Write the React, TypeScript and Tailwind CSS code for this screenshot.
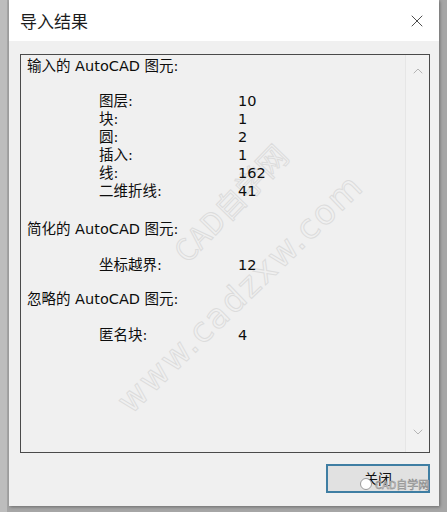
import { X, ChevronUp, ChevronDown } from "lucide-react";

const ui = { fontFamily: '"DejaVu Sans", "Noto Sans CJK SC", sans-serif' };
const cjk = { fontFamily: '"Noto Sans CJK SC", "Noto Sans", sans-serif' };

type Entry = { label: string; value: number };

const imported: Entry[] = [
  { label: "图层:", value: 10 },
  { label: "块:", value: 1 },
  { label: "圆:", value: 2 },
  { label: "插入:", value: 1 },
  { label: "线:", value: 162 },
  { label: "二维折线:", value: 41 },
];

function Row({ label, value }: Entry) {
  return (
    <div className="flex h-[18px] items-center leading-[18px]">
      <span className="w-[139px] pl-[72px] box-content">{label}</span>
      <span>{value}</span>
    </div>
  );
}

function Heading({ children }: { children: string }) {
  return <div className="h-[18px] leading-[18px]">{children}</div>;
}

export default function App() {
  return (
    <div className="relative h-[512px] w-[447px] overflow-hidden bg-[#a6a6a6]">
      <div className="absolute left-0 top-0 h-full w-[7px] bg-[#bdbdbd]" />

      <div className="relative ml-[9px] flex h-[506px] w-[430px] flex-col bg-[#f0f0f0] shadow-[1px_1px_3px_rgba(0,0,0,0.35)]">
        {/* title bar */}
        <div className="flex h-[41px] items-center justify-between bg-white pl-[11px] pr-[12px]">
          <span className="text-[17px] text-[#1b1b1b]" style={cjk}>
            导入结果
          </span>
          <X size={20} strokeWidth={1} className="text-[#2a2a2a]" />
        </div>

        {/* report box */}
        <div className="relative ml-[11px] mt-[13px] flex h-[399px] w-[410px] overflow-hidden border border-[#4a4a4a] bg-[#f0f0f0]">
          {/* site watermark, under the report text */}
          <div
            className="pointer-events-none absolute left-[57px] top-[215px] w-[320px] -rotate-[44deg] text-center text-[34px] tracking-[2px] text-transparent [-webkit-text-stroke:1px_#dcdcdc]"
            style={ui}
          >
            www.cadzxw.com
          </div>
          <div
            className="pointer-events-none absolute left-[119px] top-[125px] w-[180px] -rotate-[46deg] text-center text-[30px] text-transparent [-webkit-text-stroke:1px_#dcdcdc]"
            style={cjk}
          >
            CAD自学网
          </div>

          <div
            className="relative flex flex-1 flex-col pl-[6px] pt-[2px] text-[14.5px] text-[#0d0d0d]"
            style={ui}
          >
            <Heading>输入的 AutoCAD 图元:</Heading>
            <div className="mt-[17px]">
              {imported.map((e) => (
                <Row key={e.label} {...e} />
              ))}
            </div>
            <div className="mt-[20px]">
              <Heading>简化的 AutoCAD 图元:</Heading>
            </div>
            <div className="mt-[18px]">
              <Row label="坐标越界:" value={12} />
            </div>
            <div className="mt-[16px]">
              <Heading>忽略的 AutoCAD 图元:</Heading>
            </div>
            <div className="mt-[18px]">
              <Row label="匿名块:" value={4} />
            </div>
          </div>

          {/* scrollbar */}
          <div className="relative flex w-[24px] flex-col items-center justify-between border-l border-[#e6e6e6] bg-[#f2f2f2] pb-[12px] pt-[8px] text-[#b5b5b5]">
            <ChevronUp size={16} strokeWidth={1.5} />
            <ChevronDown size={16} strokeWidth={1.5} />
          </div>
        </div>

        <div className="mt-[11px] flex justify-end pr-[9px]">
          <button
            className="flex h-[29px] w-[104px] items-center justify-center border-2 border-[#3f7ea3] bg-[#e1e1e1] text-[14px] text-[#111]"
            style={cjk}
          >
            关闭
          </button>
        </div>
      </div>

      <div className="pointer-events-none absolute left-[360px] top-[478px] flex items-center gap-[3px]">
        <div className="h-[12px] w-[12px] rounded-full border border-[#9a9a9a] bg-white" />
        <span className="text-[11px] leading-none text-white [-webkit-text-stroke:0.6px_#8a8a8a]" style={cjk}>
          CAD自学网
        </span>
      </div>
    </div>
  );
}
